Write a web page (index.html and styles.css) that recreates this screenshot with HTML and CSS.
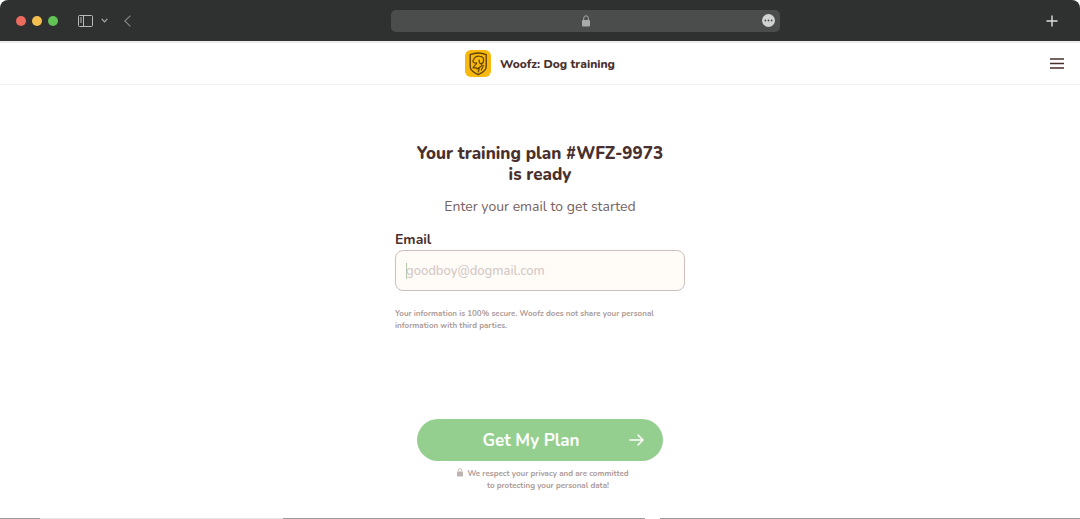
FILE: index.html
```html
<!DOCTYPE html>
<html lang="en">
<head>
    <meta charset="UTF-8">
    <meta name="viewport" content="width=device-width, initial-scale=1.0">
    <title>Woofz: Dog training</title>
    <link rel="stylesheet" href="styles.css">
</head>
<body>
    <div class="toolbar">
        <div class="toolbar-left">
            <span class="dot red"></span>
            <span class="dot yellow"></span>
            <span class="dot green"></span>
            <button type="button" class="tool sidebar" aria-label="Sidebar">
                <svg width="15" height="12" viewBox="0 0 15 12" fill="none" stroke="#b9baba">
                    <rect x=".5" y=".5" width="14" height="11" rx="1"/>
                    <path d="M5.5 .5v11M2 3h2M2 5h2M2 7h2"/>
                </svg>
            </button>
            <button type="button" class="tool chevron" aria-label="Tab groups">
                <svg width="7" height="5" viewBox="0 0 7 5" fill="none" stroke="#a9aaaa" stroke-width="1.2">
                    <path d="M.7 .8l2.8 3 2.8-3"/>
                </svg>
            </button>
            <button type="button" class="tool back" aria-label="Back">
                <svg width="7" height="12" viewBox="0 0 7 12" fill="none" stroke="#858686" stroke-width="1.2">
                    <path d="M6.4 .6L.8 6l5.6 5.4"/>
                </svg>
            </button>
        </div>
        <div class="address">
            <svg class="lock" width="8" height="12" viewBox="0 0 8 12">
                <rect y="5" width="8" height="6.5" rx="1" fill="#a9aaaa"/>
                <path d="M1.7 5V3.2a2.3 2.4 0 0 1 4.6 0V5" fill="none" stroke="#a9aaaa"/>
            </svg>
            <button type="button" class="tool more" aria-label="Page menu">
                <svg width="13" height="13" viewBox="0 0 13 13">
                    <circle cx="6.5" cy="6.5" r="6.5" fill="#d2d3d3"/>
                    <g fill="#4b4d4c">
                        <circle cx="3.4" cy="6.5" r=".9"/>
                        <circle cx="6.5" cy="6.5" r=".9"/>
                        <circle cx="9.6" cy="6.5" r=".9"/>
                    </g>
                </svg>
            </button>
        </div>
        <div class="toolbar-right">
            <button type="button" class="tool" aria-label="New tab">
                <svg width="12" height="12" viewBox="0 0 12 12" stroke="#dededf" stroke-width="1.4">
                    <path d="M6 .5v11M.5 6h11"/>
                </svg>
            </button>
        </div>
    </div>

    <header class="site-header">
        <a class="brand" href="#">
            <svg width="26" height="27" viewBox="0 0 26 27" fill="none" stroke="#624207" stroke-linecap="round" stroke-linejoin="round">
                <rect width="26" height="27" rx="6" fill="#f7b90d" stroke="none"/>
                <path stroke-width="1.4" d="M13.200 3c-3 0-5.600.6-8 1.700v11.800c0 4.200 3.700 6.300 8 8.200 4.300-1.900 8-4 8-8.200V4.700C18.800 3.600 16.200 3 13.200 3z"/>
                <path stroke-width="1.2" d="M7.800 11l1.700-3c1.200-1.700 3-2.200 5-1.800 2.700.4 4.300 1.800 4.100 4-.2 2-1 3.600-2.400 3.500-1.500-.1-2.200-1.400-2-3.700M7.800 11c.2 1.900 1.900 2.300 3.900 1.800-.2 2-2.800 2.800-3.700 5h3.400l1 1.200M15.800 13.700c.3 1 1.400 1.600 2.800 2.300M13.300 22l1-3.500h-1.600l3.600-2.500M16.300 20l1.300-3"/>
            </svg>
            <span>Woofz: Dog training</span>
        </a>
        <button type="button" class="menu" aria-label="Menu">
            <svg width="14" height="11" viewBox="0 0 14 11" stroke="#4a302d" stroke-width="1.3">
                <path d="M0 1h14M0 5.500h14M0 10h14"/>
            </svg>
        </button>
    </header>

    <main>
        <form class="plan-form">
            <h1>Your training plan #WFZ-9973<br>is ready</h1>
            <p class="lead">Enter your email to get started</p>
            <label for="email">Email</label>
            <div class="field">
                <span class="caret"></span>
                <input type="email" id="email" placeholder="goodboy@dogmail.com">
            </div>
            <p class="note">Your information is 100% secure. Woofz does not share your personal<br>information with third parties.</p>
            <button type="submit" class="submit">
                <span>Get My Plan</span>
                <svg width="15" height="12" viewBox="0 0 15 12" fill="none" stroke="#fff" stroke-width="1.5" stroke-linecap="round" stroke-linejoin="round">
                    <path d="M1 6h13M9 1l5 5-5 5"/>
                </svg>
            </button>
            <div class="privacy">
                <svg width="6" height="9" viewBox="0 0 6 9">
                    <rect y="3.500" width="6" height="5" rx=".8" fill="#bfb3b0"/>
                    <path d="M1.300 3.500V2.300a1.700 1.700 0 0 1 3.400 0v1.200" fill="none" stroke="#bfb3b0" stroke-width=".8"/>
                </svg>
                <p>We respect your privacy and are committed<br>to protecting your personal data!</p>
            </div>
        </form>
    </main>
    <div class="bottom-edge"><span></span><span></span><span></span><span></span><span></span></div>
</body>
</html>
```

FILE: styles.css
```css
* {
    box-sizing: border-box;
}
body {
    display: flex;
    flex-direction: column;
    min-height: 100vh;
    margin: 0;
    background-color: #fff;
    color: #4a302d;
    font-family: Nunito, Lato, sans-serif;
}
h1, p {
    margin: 0;
}
button {
    padding: 0;
    border: none;
    background: none;
    font-family: inherit;
    cursor: pointer;
}
svg {
    display: block;
}

/* Browser toolbar */
.toolbar {
    display: grid;
    grid-template-columns: 375fr 389fr 284fr;
    align-items: center;
    height: 41px;
    padding: 0 16px;
    border-radius: 8px 8px 0 0;
    background-color: #2f3130;
}
.toolbar-left {
    display: flex;
    align-items: center;
    gap: 6px;
}
.dot {
    width: 10px;
    height: 10px;
    border-radius: 50%;
}
.red {
    background-color: #ec6a5e;
}
.yellow {
    background-color: #f4bf4f;
}
.green {
    background-color: #61c454;
}
.sidebar {
    margin-left: 14px;
}
.chevron {
    margin-left: 2px;
}
.back {
    margin-left: 10px;
}
.address {
    display: grid;
    grid-template-columns: 1fr auto 1fr;
    align-items: center;
    height: 22px;
    padding: 0 5px;
    border-radius: 5px;
    background-color: #4b4d4c;
}
.lock {
    grid-column: 2;
}
.more {
    justify-self: end;
}
.toolbar-right {
    display: flex;
    justify-content: flex-end;
    padding-right: 6px;
}

/* Site header */
.site-header {
    display: grid;
    grid-template-columns: 1fr auto 1fr;
    align-items: center;
    height: 44px;
    padding: 0 16px;
    border-top: 2px solid #ebebeb;
    border-bottom: 1px solid #f3f3f3;
}
.brand {
    display: flex;
    grid-column: 2;
    align-items: center;
    gap: 9px;
    color: inherit;
    font-size: 12px;
    font-weight: 800;
    text-decoration: none;
}
.menu {
    justify-self: end;
}

/* Email form */
main {
    flex: 1;
    padding: 58px 16px 0;
}
.plan-form {
    display: flex;
    flex-direction: column;
    max-width: 290px;
    margin: 0 auto;
}
h1 {
    font-size: 17px;
    font-weight: 800;
    line-height: 21px;
    text-align: center;
    white-space: nowrap;
}
.lead {
    margin: 12px 0 14px;
    color: #756160;
    font-size: 14px;
    line-height: 20px;
    text-align: center;
}
label {
    margin-bottom: 1px;
    font-size: 14px;
    font-weight: bold;
    line-height: 18px;
}
.field {
    display: flex;
    align-items: center;
    height: 41px;
    padding: 0 10px;
    border: 1px solid #cdbfbc;
    border-radius: 8px;
    background-color: #fffbf7;
}
.caret {
    width: 1px;
    height: 16px;
    margin-right: -1px;
    background-color: #b5c9ac;
}
input {
    flex: 1;
    min-width: 0;
    padding: 0;
    border: none;
    outline: none;
    background: none;
    color: inherit;
    font-family: inherit;
    font-size: 13px;
    font-weight: 500;
}
input::placeholder {
    color: #d3c9c6;
}
.note {
    margin-top: 17px;
    color: #ac9b98;
    font-size: 8px;
    font-weight: 700;
    line-height: 12px;
    white-space: nowrap;
}
.submit {
    display: grid;
    grid-template-columns: 1fr auto 1fr;
    align-items: center;
    height: 42px;
    margin: 87px 22px 0;
    padding: 0 19px 0 1px;
    border-radius: 22px;
    background-color: #94cf90;
    color: #fff;
    font-size: 17px;
    font-weight: bold;
}
.submit span {
    grid-column: 2;
}
.submit svg {
    justify-self: end;
}
.privacy {
    display: flex;
    justify-content: center;
    gap: 4px;
    margin-top: 7px;
    padding-left: 6px;
    color: #ac9b98;
    font-size: 8px;
    font-weight: 700;
    line-height: 12px;
    text-align: center;
}

/* Edge of the window below the page */
.bottom-edge {
    display: grid;
    grid-template-columns: 40fr 243fr 362fr 15fr 420fr;
    height: 1px;
    background-color: #999;
}
.bottom-edge span:nth-child(2) {
    background-color: #e4e4e4;
}
.bottom-edge span:nth-child(4) {
    background-color: #fff;
}
```
